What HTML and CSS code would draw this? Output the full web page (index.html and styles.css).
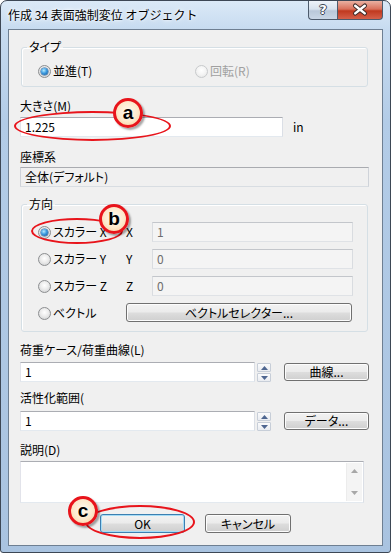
FILE: index.html
```html
<!DOCTYPE html>
<html lang="ja">
<head>
<meta charset="utf-8">
<title>作成 34 表面強制変位 オブジェクト</title>
<link rel="stylesheet" href="styles.css">
</head>
<body>
<div class="window">
  <div class="titlebar">
    <span class="title">作成 34 表面強制変位 オブジェクト</span>
    <div class="caption-btns">
      <div class="cbtn help"><span>?</span></div>
      <div class="cbtn close">
        <svg width="46" height="18" viewBox="0 0 46 18">
          <path d="M18 4.5 L28 12.5 M28 4.5 L18 12.5" stroke="#3a2a28" stroke-width="4.6" stroke-linecap="round" fill="none"/>
          <path d="M18 4.5 L28 12.5 M28 4.5 L18 12.5" stroke="#fff" stroke-width="2.6" stroke-linecap="round" fill="none"/>
        </svg>
      </div>
    </div>
  </div>

  <div class="client">
    <fieldset class="group g-type">
      <legend>タイプ</legend>
      <div class="type-row">
        <label class="radio"><span class="rb on"></span>並進(T)</label>
        <label class="radio disabled"><span class="rb"></span>回転(R)</label>
      </div>
    </fieldset>

    <div class="lbl lbl-size">大きさ(M)</div>
    <div class="size-row">
      <div class="tb tb-size">1.225</div>
      <span class="unit">in</span>
    </div>

    <div class="lbl lbl-coord">座標系</div>
    <div class="tb tb-ro">全体(デフォルト)</div>

    <fieldset class="group g-dir">
      <legend>方向</legend>
      <div class="dir-grid">
        <label class="radio"><span class="rb on"></span>スカラー X</label>
        <span class="axis">X</span>
        <div class="tb tb-dis">1</div>

        <label class="radio"><span class="rb"></span>スカラー Y</label>
        <span class="axis">Y</span>
        <div class="tb tb-dis">0</div>

        <label class="radio"><span class="rb"></span>スカラー Z</label>
        <span class="axis">Z</span>
        <div class="tb tb-dis">0</div>

        <label class="radio"><span class="rb"></span>ベクトル</label>
        <div class="btn btn-vec">ベクトルセレクター...</div>
      </div>
    </fieldset>

    <div class="lbl lbl-load">荷重ケース/荷重曲線(L)</div>
    <div class="spin-row row-load">
      <div class="tb tb-spin">1</div>
      <div class="spinner">
        <span class="sp up"><svg width="7" height="4" viewBox="0 0 7 4"><path d="M0 4 L3.5 0 L7 4 Z" fill="#4e6690"/></svg></span>
        <span class="sp dn"><svg width="7" height="4" viewBox="0 0 7 4"><path d="M0 0 L3.5 4 L7 0 Z" fill="#4e6690"/></svg></span>
      </div>
      <div class="btn btn-side">曲線...</div>
    </div>

    <div class="lbl lbl-act">活性化範囲(</div>
    <div class="spin-row row-act">
      <div class="tb tb-spin">1</div>
      <div class="spinner">
        <span class="sp up"><svg width="7" height="4" viewBox="0 0 7 4"><path d="M0 4 L3.5 0 L7 4 Z" fill="#4e6690"/></svg></span>
        <span class="sp dn"><svg width="7" height="4" viewBox="0 0 7 4"><path d="M0 0 L3.5 4 L7 0 Z" fill="#4e6690"/></svg></span>
      </div>
      <div class="btn btn-side">データ...</div>
    </div>

    <div class="lbl lbl-desc">説明(D)</div>
    <div class="memo">
      <div class="memo-text"></div>
      <div class="vscroll">
        <svg width="7" height="4" viewBox="0 0 7 4"><path d="M0 4 L3.5 0 L7 4 Z" fill="#a7a7a7"/></svg>
        <svg width="7" height="4" viewBox="0 0 7 4"><path d="M0 0 L3.5 4 L7 0 Z" fill="#a7a7a7"/></svg>
      </div>
    </div>

    <div class="btn-row">
      <div class="btn btn-ok">OK</div>
      <div class="btn btn-cancel">キャンセル</div>
    </div>
  </div>

  <div class="ring ring-a"></div>
  <div class="ring ring-b"></div>
  <div class="ring ring-c"></div>
  <div class="badge badge-a">a</div>
  <div class="badge badge-b">b</div>
  <div class="badge badge-c">c</div>
</div>
</body>
</html>
```

FILE: styles.css
```css
* { box-sizing: border-box; }
html, body { margin: 0; padding: 0; }
body {
  width: 391px;
  height: 553px;
  overflow: hidden;
  background: #ffffff;
  font-family: "Noto Sans CJK JP", "Noto Sans", sans-serif;
  font-size: 12px;
  line-height: 14px;
  color: #000;
  font-feature-settings: "palt" 1;
}

.window {
  position: relative;
  width: 391px;
  height: 553px;
  border: 1px solid #3d4755;
  border-radius: 7px 7px 3px 3px;
  background: linear-gradient(180deg, #dbe9f7 0px, #c7dbf0 28px, #b3cce7 120px, #a9c3e0 553px);
  display: flex;
  flex-direction: column;
}

/* title bar */
.titlebar {
  height: 28px;
  display: flex;
  align-items: flex-start;
  padding-left: 7px;
}
.title {
  margin-top: 7px;
  color: #000;
  text-shadow: 0 0 6px #ffffff, 0 0 3px #ffffff;
  white-space: nowrap;
  font-feature-settings: normal;
}
.caption-btns {
  margin-left: auto;
  margin-right: 7px;
  display: flex;
}
.cbtn {
  height: 19px;
  border: 1px solid #4d5b6c;
  border-top: none;
  display: flex;
  align-items: center;
  justify-content: center;
}
.help {
  width: 29px;
  border-right: none;
  border-radius: 0 0 0 4px;
  background: linear-gradient(180deg, #eef3f9 0%, #d8e2ee 45%, #b9c8d9 55%, #c9d7e6 100%);
}
.help span {
  font-family: "DejaVu Sans", sans-serif;
  font-weight: bold;
  font-size: 13px;
  color: #fff;
  text-shadow: -1px 0 #3c4654, 1px 0 #3c4654, 0 -1px #3c4654, 0 1px #3c4654;
}
.close {
  width: 46px;
  border-radius: 0 0 4px 0;
  background: linear-gradient(180deg, #eab1a2 0%, #d9705b 45%, #c0391f 55%, #d5604a 100%);
}
.close svg { display: block; }

/* client */
.client {
  margin: 0 7px;
  height: 517px;
  border: 1px solid #6e7f92;
  background: #f0f0f0;
  padding: 0 0 0 11px;
  display: flex;
  flex-direction: column;
  align-items: flex-start;
}

.group {
  margin: 0;
  border: 1px solid #d5dfe5;
  border-radius: 3px;
  padding: 0 0 8px 5px;
  width: 347px;
  min-inline-size: 0;
  box-shadow: inset 1px 1px 0 #ffffff;
}
.group legend {
  padding: 0 2px;
  line-height: 14px;
}
.g-type { margin-top: 10px; margin-left: 1px; }
.g-dir { margin-top: 10px; margin-left: 1px; }

.type-row {
  margin-top: 10px;
  padding-left: 11px;
  display: grid;
  grid-template-columns: 157px auto;
  height: 14px;
}

.radio {
  display: flex;
  align-items: center;
  gap: 2px;
  white-space: nowrap;
  height: 14px;
}
.radio.disabled { color: #a0a0a0; }
.rb {
  width: 13px;
  height: 13px;
  flex: none;
  border-radius: 50%;
  border: 1px solid #8c8e90;
  background: radial-gradient(circle at 50% 40%, #ffffff 0%, #ececec 45%, #c9cbcd 100%);
  display: flex;
  align-items: center;
  justify-content: center;
}
.rb.on::after {
  content: "";
  width: 7px;
  height: 7px;
  border-radius: 50%;
  background: radial-gradient(circle at 40% 35%, #b6ecff 0%, #3d9be0 45%, #0e4f90 100%);
  box-shadow: 0 0 0 0.5px #2a5f94;
}
.radio.disabled .rb {
  border-color: #c8cacc;
  background: radial-gradient(circle at 50% 40%, #ffffff 0%, #f4f4f4 50%, #e2e2e2 100%);
}

.lbl { white-space: nowrap; }
.lbl-size { margin-top: 12px; }
.lbl-coord { margin-top: 13px; }
.lbl-load { margin-top: 11px; }
.lbl-act { margin-top: 9px; }
.lbl-desc { margin-top: 12px; }

.tb {
  height: 20px;
  border: 1px solid;
  border-color: #abadb3 #dbdfe6 #e3e9ef #e2e3ea;
  background: #ffffff;
  padding-left: 4px;
  display: flex;
  align-items: center;
  white-space: nowrap;
}
.size-row {
  margin-top: 4px;
  display: flex;
  align-items: center;
}
.tb-size { width: 263px; }
.unit { margin-left: 10px; }

.tb-ro {
  margin-top: 3px;
  width: 349px;
  background: #f0f0f0;
  border-color: #a9abb0 #cfd3d9 #d8dde2 #cfd3d9;
}

.dir-grid {
  margin-top: 11px;
  padding-left: 11px;
  display: grid;
  grid-template-columns: 88px 26px 201px;
  grid-auto-rows: 20px;
  row-gap: 7px;
  align-items: center;
}
.tb-dis {
  background: #f4f4f4;
  border-color: #c3c6cb #d9dce0 #dfe2e6 #d9dce0;
  color: #6d6d6d;
}
.btn-vec {
  grid-column: 2 / span 2;
  width: 226px;
  height: 19px;
  align-self: start;
}

.btn {
  display: flex;
  align-items: center;
  justify-content: center;
  border: 1px solid #707070;
  border-radius: 3px;
  background: linear-gradient(180deg, #f2f2f2 0%, #ebebeb 48%, #dddddd 52%, #cfcfcf 100%);
  box-shadow: inset 0 0 0 1px #fcfcfc;
  white-space: nowrap;
}

.spin-row {
  display: flex;
  align-items: flex-start;
}
.row-load { margin-top: 5px; }
.row-act { margin-top: 6px; }
.tb-spin { width: 235px; }
.spinner {
  margin-left: 2px;
  margin-top: 1px;
  width: 14px;
  height: 19px;
  display: flex;
  flex-direction: column;
  gap: 1px;
}
.sp {
  flex: 1;
  border: 1px solid #c7ced8;
  border-radius: 1px;
  background: linear-gradient(180deg, #fbfbfc 0%, #e9ecf1 100%);
  display: flex;
  align-items: center;
  justify-content: center;
}
.sp svg { display: block; }
.btn-side {
  margin-left: 13px;
  margin-top: 1px;
  width: 85px;
  height: 18px;
}

.memo {
  margin-top: 4px;
  width: 344px;
  height: 42px;
  border: 1px solid;
  border-color: #abadb3 #dbdfe6 #e3e9ef #e2e3ea;
  background: #ffffff;
  display: flex;
}
.memo-text { flex: 1; }
.vscroll {
  width: 16px;
  margin: 1px 1px 1px 0;
  background: #f4f4f4;
  border-left: 1px solid #ececec;
  display: flex;
  flex-direction: column;
  align-items: center;
  justify-content: space-between;
  padding: 6px 0 6px;
}
.vscroll svg { display: block; }

.btn-row {
  margin-top: 11px;
  margin-left: 80px;
  display: flex;
  gap: 20px;
}
.btn-ok {
  width: 85px;
  height: 19px;
  border-color: #3c7fb1;
  box-shadow: inset 0 0 0 1px #a6dcf6;
}
.btn-cancel {
  width: 86px;
  height: 19px;
}

/* annotations overlaid on the dialog */
.ring {
  position: absolute;
  border: 2px solid #e8141b;
  border-radius: 50%;
}
.ring-a { left: 13px; top: 110px; width: 157px; height: 30px; }
.ring-b { left: 30px; top: 217px; width: 92px; height: 26px; }
.ring-c { left: 84px; top: 504px; width: 110px; height: 34px; }

.badge {
  position: absolute;
  width: 30px;
  height: 30px;
  border-radius: 50%;
  border: 3px solid #e8141b;
  background: radial-gradient(circle at 50% 45%, #fffaf0 0%, #fde9cc 55%, #f6c891 100%);
  box-shadow: 2px 2px 2px rgba(0, 0, 0, 0.35);
  display: flex;
  align-items: center;
  justify-content: center;
  font-family: "Liberation Sans", Arial, sans-serif;
  font-weight: bold;
  font-size: 19px;
  line-height: 1;
  color: #000;
  padding-bottom: 2px;
}
.badge-a { left: 112px; top: 97px; }
.badge-b { left: 98px; top: 203px; }
.badge-c { left: 67px; top: 495px; }
```
